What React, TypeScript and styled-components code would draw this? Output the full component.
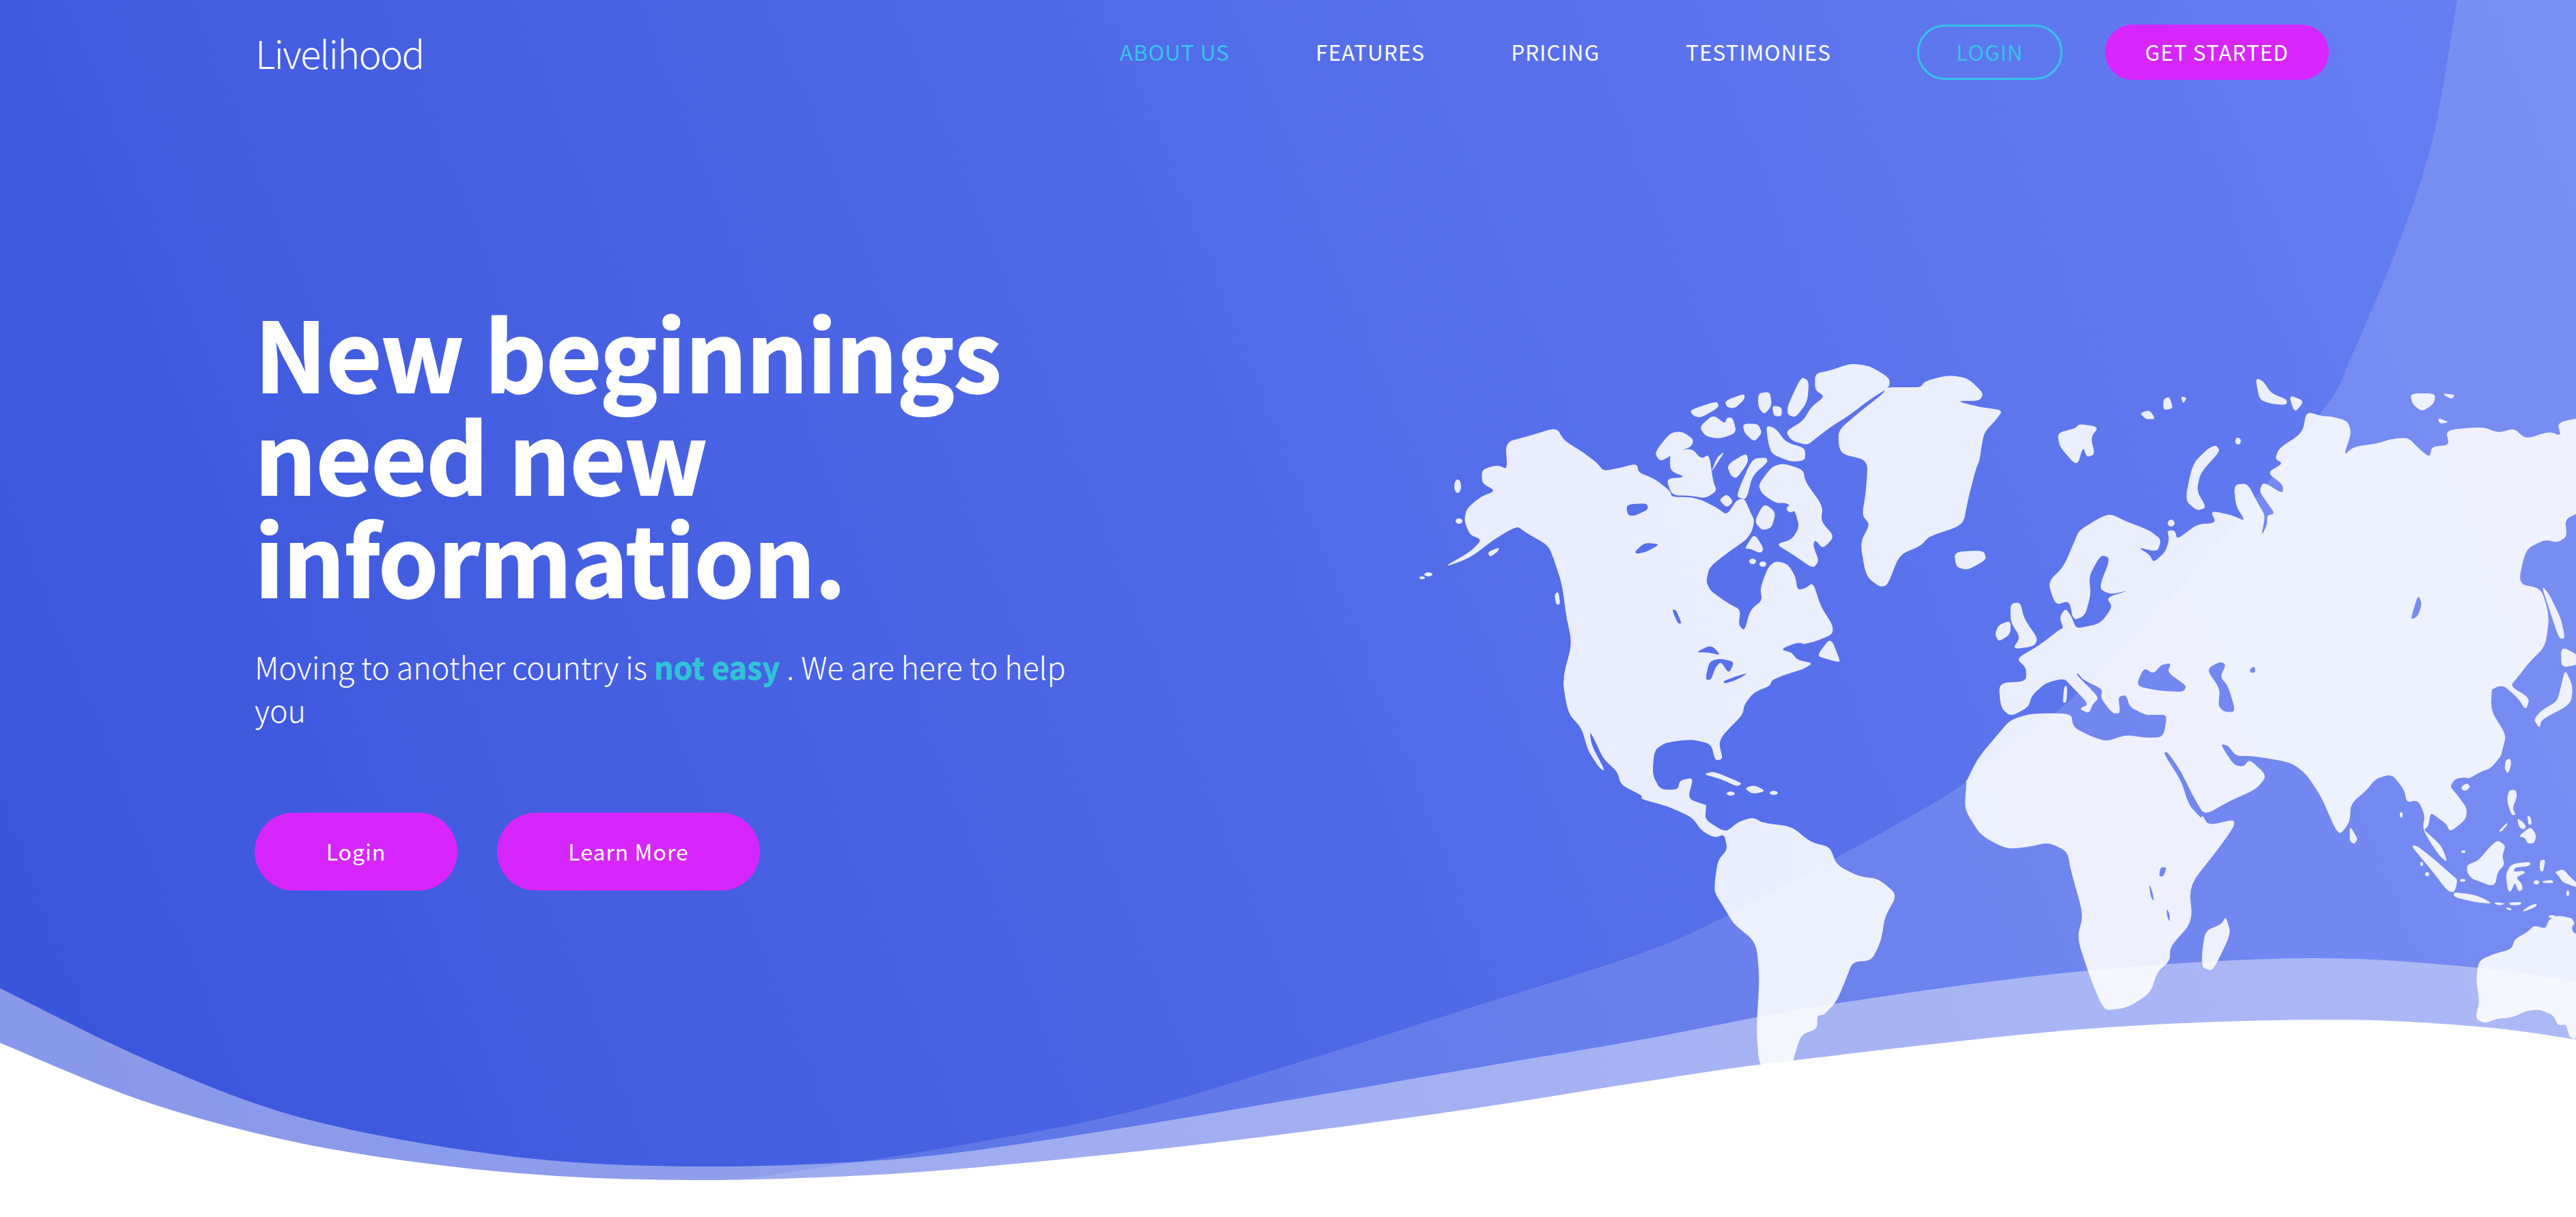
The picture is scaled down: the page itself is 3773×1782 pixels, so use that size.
import React from "react";
import styled, { createGlobalStyle } from "styled-components";

const FONT = `"Noto Sans CJK SC", "Open Sans", sans-serif`;

const GlobalStyle = createGlobalStyle`
	html, body {
		margin: 0;
		padding: 0;
		background: #fff;
	}
	body {
		font-family: ${FONT};
	}
`;

const Page = styled.div`
	position: relative;
	width: 3773px;
	height: 1782px;
	overflow: hidden;
	color: #fff;
`;

const Backdrop = styled.svg`
	position: absolute;
	top: 0;
	left: 0;
`;

const Content = styled.div`
	position: relative;
	display: flex;
	flex-direction: column;
	padding: 36px 362px 0 373px;
`;

const Header = styled.header`
	display: flex;
	align-items: center;
	height: 81px;
`;

const Logo = styled.div`
	padding-left: 1px;
	font-size: 56px;
	font-weight: 300;
	letter-spacing: -1.7px;
	line-height: 81px;
`;

const Nav = styled.nav`
	display: flex;
	align-items: center;
	margin-left: auto;
`;

const NavLink = styled.a<{ $active?: boolean }>`
	padding-bottom: 4px;
	margin-right: 126px;
	font-size: 31.5px;
	font-weight: 400;
	letter-spacing: 1px;
	color: ${(p) => (p.$active ? "#36c3e8" : "#fff")};
`;

const LoginButton = styled.a`
	box-sizing: border-box;
	display: flex;
	align-items: center;
	justify-content: center;
	width: 213px;
	height: 81px;
	padding-bottom: 4px;
	border: 3px solid #36c3e8;
	border-radius: 41px;
	font-size: 31.5px;
	letter-spacing: 1px;
	color: #36c3e8;
`;

const StartButton = styled.a`
	box-sizing: border-box;
	display: flex;
	align-items: center;
	justify-content: center;
	width: 328px;
	height: 81px;
	padding-bottom: 4px;
	margin-left: 62px;
	border-radius: 41px;
	background: #d626fb;
	font-size: 31.5px;
	letter-spacing: 1px;
`;

const Hero = styled.section`
	display: flex;
	flex-direction: column;
	margin-top: 322px;
`;

const Title = styled.h1`
	width: 1200px;
	margin: 0;
	font-size: 141px;
	font-weight: 700;
	line-height: 150px;
	letter-spacing: -1px;
	-webkit-text-stroke: 2px #fff;
`;

const Lead = styled.p`
	width: 1200px;
	margin: 55px 0 0;
	font-size: 44.8px;
	font-weight: 300;
	line-height: 63px;
`;

const Accent = styled.strong`
	font-weight: 700;
	color: #2fc4d8;
	-webkit-text-stroke: 0.6px #2fc4d8;
`;

const Actions = styled.div`
	display: flex;
	gap: 58px;
	margin-top: 120px;
`;

const ActionButton = styled.a<{ $width: number }>`
	box-sizing: border-box;
	display: flex;
	align-items: center;
	justify-content: center;
	width: ${(p) => p.$width}px;
	height: 114px;
	padding-bottom: 2px;
	border-radius: 57px;
	background: #d626fb;
	font-size: 32px;
	letter-spacing: 1px;
`;

// the crops the outlines were read from: offset x, offset y, scale x, scale y
const FRAMES: Record<string, number[]> = {
	a: [2050, 500, 0.574, 0.4464],
	b: [2873, 500, 0.574, 0.4464],
	c: [2300, 1100, 0.9394, 0.3333],
	d: [3400, 1050, 0.3333, 0.3333],
};

const toPoints = (frame: string, raw: string) => {
	const [ox, oy, sx, sy] = FRAMES[frame];
	return raw
		.trim()
		.split(/\s+/)
		.map((pair) => {
			const [x, y] = pair.split(",").map(Number);
			return [ox + x * sx, oy + y * sy];
		});
};

// rounded polygon: each corner is cut at 35% of the way along its two edges
const blob = (segments: [string, string][]) => {
	const pts = segments.flatMap(([f, raw]) => toPoints(f, raw));
	const along = (p: number[], q: number[], t: number) => [p[0] + (q[0] - p[0]) * t, p[1] + (q[1] - p[1]) * t];
	const fmt = (p: number[]) => `${p[0].toFixed(1)} ${p[1].toFixed(1)}`;
	let d = "";
	pts.forEach((p, i) => {
		const prev = pts[(i + pts.length - 1) % pts.length];
		const next = pts[(i + 1) % pts.length];
		const enter = along(p, prev, 0.35);
		const leave = along(p, next, 0.35);
		d += `${i === 0 ? "M" : "L"}${fmt(enter)}Q${fmt(p)} ${fmt(leave)}`;
	});
	return d + "Z";
};

const curve = (pts: number[][]) => {
	let d = `M${pts[0][0]} ${pts[0][1]}`;
	for (let i = 0; i < pts.length - 1; i++) {
		const p0 = pts[Math.max(i - 1, 0)];
		const p1 = pts[i];
		const p2 = pts[i + 1];
		const p3 = pts[Math.min(i + 2, pts.length - 1)];
		d += `C${p1[0] + (p2[0] - p0[0]) / 6} ${p1[1] + (p2[1] - p0[1]) / 6} ${p2[0] - (p3[0] - p1[0]) / 6} ${p2[1] - (p3[1] - p1[1]) / 6} ${p2[0]} ${p2[1]}`;
	}
	return d;
};

const LAND: [string, string][][] = [
	// north and central america
	[
		["a", "400,282 420,325 470,365 505,400 520,425 560,415 605,400 610,430 650,450 690,490 695,510 740,510 770,520 810,545 835,570 860,520 880,515 895,560 905,585 900,620 885,650 840,690 790,740 782,790 795,820 840,860 870,880 865,930 880,950 895,880 925,850 920,810 940,740 960,720 990,730 1010,770 1015,815 1035,810 1055,790 1075,870 1105,930 1105,960 1060,985 970,1010 1000,1020 1015,1045 1055,1055 1030,1075 990,1090 950,1110 945,1130 905,1150 880,1190 875,1225 825,1290 815,1320 825,1370 805,1375 795,1320 745,1305 680,1315 650,1340 645,1420 665,1470 710,1470 715,1440 750,1430 735,1500 780,1520"],
		["c", "212,235 210,300 235,345 245,350 262,310 285,290 300,315 345,330 375,400 405,420 415,500 450,550 480,560 510,630 490,730 485,830 470,920 440,925 430,1000 415,1100 395,1160 385,1160 385,1220 360,1245 350,1330 345,1400 295,1400 290,1220 295,1000 290,840 255,760 240,690 225,620 225,580 230,480 245,430 240,365 225,380 205,350 190,290 150,240 110,210"],
		["a", "620,1490 565,1455 555,1410 520,1370 495,1300 485,1280 490,1325 525,1410 510,1400 480,1340 465,1270 430,1220 415,1110 440,990 425,900 415,800 395,720 380,670 320,625 300,605 240,650 180,710 110,742 180,690 210,650 180,635 165,590 170,550 205,510 245,490 210,465 210,420 250,405 275,420 270,330 330,310"],
	],
	// arctic islands
	[["a", "1060,105 1100,95 1150,72 1200,80 1250,120 1250,150 1200,190 1150,240 1100,280 1060,320 1040,340 1000,325 985,295 1030,260 1050,215 1085,180 1060,160"]],
	[["a", "990,210 1025,115 1045,130 1040,200 1010,250 990,240"]],
	[["a", "740,225 810,195 815,215 770,250 750,245"]],
	[["a", "830,195 880,170 880,190 855,220 835,215"]],
	[["a", "915,170 945,165 950,210 930,240 915,215"]],
	[["a", "950,210 975,215 975,245 955,245"]],
	[["a", "765,280 800,240 830,270 835,250 850,250 860,300 815,320 780,310"]],
	[["a", "875,270 915,270 925,300 905,330 880,300"]],
	[["a", "935,275 960,285 985,330 1035,350 1035,390 1000,395 950,370 940,330"]],
	[["a", "650,365 690,300 720,295 750,320 745,345 705,365 665,395"]],
	[["a", "690,365 745,350 770,385 790,370 800,460 810,490 780,515 740,505 695,505 680,450 730,445 690,425"]],
	[["a", "810,380 830,360 805,410 795,430"]],
	[["a", "835,405 885,365 890,395 860,450 845,440"]],
	[["a", "870,470 900,385 935,380 940,395 900,440 885,520 860,510"]],
	[["a", "915,470 950,410 980,400 1030,420 1035,460 1080,540 1075,590 1110,640 1080,680 1060,650 1055,670 1070,720 1055,745 1005,700 960,665 1000,650 1020,610 1010,560 990,530 960,530 925,500"]],
	[["a", "880,680 905,630 930,680 920,695 895,680"]],
	[["a", "905,590 930,530 960,560 950,610 925,620"]],
	[["a", "815,520 835,500 852,525 835,545"]],
	[["a", "1065,1030 1100,970 1125,1050 1115,1050 1085,1040"]],
	[["a", "395,830 405,820 410,860 400,865"]],
	[["a", "422,905 440,915 460,960 450,960"]],
	[["a", "225,690 255,675 250,690 230,708"]],
	[["a", "775,1420 800,1410 840,1430 875,1450 860,1460 820,1435"]],
	[["a", "880,1465 905,1455 935,1475 900,1485"]],
	// greenland, iceland
	[["a", "1120,290 1180,225 1235,170 1240,150 1290,150 1330,150 1340,130 1400,110 1450,120 1490,170 1480,195 1420,195 1480,215 1540,225 1520,260 1490,300 1480,390 1470,420 1450,520 1440,590 1420,610 1350,640 1330,670 1275,700 1245,800 1225,805 1190,770 1175,660 1200,600 1180,570 1190,490 1195,390 1130,370 1120,340"]],
	[["a", "1415,690 1490,685 1498,715 1450,750 1420,740"]],
	// eurasia with africa
	[
		["b", "220,790 260,740 290,650 300,620 350,580 380,565 420,590 480,620 510,650 500,690 450,675 480,700 490,725 520,690 530,650 525,620 545,620 550,650 600,600 650,595 635,555 690,570 725,590 700,540 695,470 730,465 760,540 775,570 765,640 780,600 780,570 800,565 775,520 760,490 770,460 820,500 820,470 780,430 820,400 800,385 810,350 870,300 880,230 920,245 940,245 985,260 995,300 975,375 1000,345 1060,335 1095,320 1140,315 1170,355 1195,380 1200,345 1245,340 1235,290 1330,280 1370,300 1410,285 1440,320 1500,295 1530,310 1520,265 1600,245 1600,555 1568,565 1540,585 1545,640 1520,660 1490,650 1440,680 1420,795 1480,810 1500,900 1490,1000 1450,1050 1420,1100 1400,1130 1450,1170 1440,1210 1420,1170 1380,1125 1340,1150 1325,1140 1355,1110 1350,1210 1390,1290 1380,1340"],
		["d", "790,170 745,225 700,240 650,270 630,265 590,270 565,305 600,345 640,400 635,450 565,505 550,470 510,440 480,420 470,480 450,495 490,530 530,570 555,640 520,610 485,560 445,490 455,430 425,365 375,375 365,320 310,250 240,270 200,320 130,380 125,460 85,515 60,490 0,350"],
		["b", "880,1420 840,1380 745,1360 700,1360 680,1325 660,1320 695,1390 720,1395 735,1370 780,1425 750,1470 680,1510 620,1555 590,1490 560,1410 525,1345 515,1350 560,1440 580,1520 612,1565"],
		["c", "985,280 995,325 1035,300 1035,330 1010,430 965,590 970,750 935,860 935,920 915,970 905,1060 870,1125 835,1140 825,1095 810,990 790,820 800,720 780,520 775,440 745,400 715,420 680,430 640,370 620,280 615,240 618,120"],
		["b", "10,1450 40,1370 85,1300 125,1240 180,1220 280,1220 285,1265 330,1295 370,1312 420,1290 470,1300 515,1298 525,1225 495,1225 470,1225 430,1200 420,1160 400,1165 405,1220 385,1220 355,1170 360,1140 310,1110 295,1085 295,1095 330,1140 350,1170 335,1190 325,1220 300,1205 325,1190 280,1130 262,1105 215,1120 180,1160 170,1200 125,1230 100,1200 95,1120 165,1115 165,1070 140,1040 195,1000 250,945 260,940 250,905 265,875 280,900 290,935 300,940 355,925 385,870 370,840 430,815 380,830 350,810 380,710 355,700 325,770 330,830 315,900 285,915 275,850 240,865"],
	],
	// islands around europe and asia
	[["b", "125,860 150,855 160,910 195,975 185,1000 130,1010 150,970 125,920"]],
	[["b", "95,930 125,915 125,960 95,985 85,960"]],
	[["b", "245,300 290,285 300,270 350,280 330,315 340,370 320,380 310,345 295,410 250,345"]],
	[["b", "455,235 480,225 495,255 470,255"]],
	[["b", "515,190 530,180 540,220 515,225"]],
	[["b", "560,180 575,185 565,205"]],
	[["b", "650,340 660,360 610,430 600,490 625,545 600,555 570,520 590,400 630,350"]],
	[["b", "750,120 770,130 790,170 830,190 830,208 790,205 760,190"]],
	[["b", "835,175 875,195 850,235"]],
	[["b", "1145,170 1210,170 1205,205 1175,230 1150,205"]],
	[["b", "1225,170 1260,175 1250,190"]],
	[["b", "1215,250 1245,265 1220,270"]],
	[["b", "1480,800 1500,830 1530,910 1540,975 1525,975 1500,880"]],
	[["b", "1540,1075 1560,1130 1555,1190 1480,1240 1475,1270 1460,1240 1480,1210 1520,1180 1530,1130"]],
	[["b", "1530,1000 1575,1030 1575,1060 1530,1070"]],
	[["b", "262,1130 270,1130 268,1185 258,1185"]],
	// indian ocean and south east asia
	[["c", "1022,725 1030,800 1010,920 1000,965 985,950 985,880 990,790 1015,760"]],
	[["d", "125,490 130,485 160,535 145,558 125,545"]],
	[["d", "615,305 640,290 655,305 635,325 618,320"]],
	[["d", "810,190 830,180 835,210 820,250 805,225"]],
	[["d", "825,320 855,320 860,350 840,400 855,430 835,430 815,365"]],
	[["d", "860,445 885,460 900,480 890,495 870,485"]],
	[["d", "905,430 920,440 925,470 910,475"]],
	[["d", "865,525 920,480 945,520 935,555 905,555 895,530"]],
	[["d", "780,500 815,465 820,470 790,505"]],
	[["d", "640,650 690,630 740,570 775,540 810,565 795,610 805,650 775,680 765,735 740,740 690,720 660,710 640,680"]],
	[["d", "395,565 420,565 490,620 570,690 600,715 585,770 555,765 490,680 440,620"]],
	[["d", "580,775 590,770 670,780 720,800 750,820 690,815 620,800 585,790"]],
	[["d", "755,815 785,815 810,820 780,828"]],
	[["d", "825,815 880,812 875,825 830,827"]],
	[["d", "810,835 835,840 835,850 815,845"]],
	[["d", "885,850 920,825 950,820 940,835 890,855"]],
	[["d", "810,690 835,645 920,635 915,655 850,660 845,680 890,675 895,685 855,705 880,730 885,760 865,765 850,725 835,765 820,765"]],
	[["d", "960,630 985,625 975,680 960,675"]],
	[["d", "970,720 1015,715 1020,730 975,728"]],
	[["d", "1025,680 1065,668 1090,700 1125,730 1125,750 1060,725 1045,700"]],
	// australia
	[["d", "1040,870 1125,890 1125,1420 1090,1405 1085,1385 1075,1350 1040,1355 1020,1310 960,1285 900,1290 840,1320 770,1325 720,1345 685,1330 680,1310 695,1250 680,1155 692,1070 760,1040 835,1020 850,975 905,945 935,915 985,930 1000,890"]],
];

const WATER: [string, string][][] = [
	[["a", "578,535 630,530 635,550 600,572 582,570"]],
	[["a", "600,690 625,660 665,665 630,690 605,697"]],
	[["a", "695,880 705,880 720,925 710,925"]],
	[["a", "755,1020 795,995 820,1030 790,1020"]],
	[["a", "780,1110 790,1050 815,1040 855,1050 840,1090 820,1050 805,1070 795,1110"]],
	[["a", "825,1115 865,1095 890,1088 860,1110 830,1122"]],
	[["a", "970,1010 1020,985 1040,1000 1015,1010"]],
	[["a", "985,590 1005,578 1010,595 990,612"]],
	[["b", "445,1130 465,1070 490,1090 510,1060 535,1055 525,1085 575,1130 565,1150 500,1145"]],
	[["b", "625,1075 660,1050 675,1060 660,1100 680,1130 700,1215 670,1215 655,1195 660,1140"]],
	[["b", "1145,915 1165,830 1175,860 1165,900"]],
	[["b", "735,1075 748,1065 750,1085 738,1087"]],
	[["c", "920,510 930,510 925,550 918,550"]],
	[["c", "902,580 908,620 910,660 905,640"]],
	[["c", "930,690 935,720 934,750 930,720"]],
	[["d", "1100,920 1125,900 1125,955 1105,945"]],
];

const ISLETS = [
	[2135, 712, 5, 10],
	[2137, 763, 5, 4],
	[2092, 841, 6, 3],
	[2083, 846, 4, 2],
	[2535, 1162, 6, 3],
	[2598, 1161, 6, 3],
	[2567, 822, 5, 4],
	[2582, 826, 5, 4],
	[2618, 848, 3, 4],
	[2623, 745, 6, 5],
	[3180, 766, 5, 5],
	[3278, 646, 4, 5],
	[3517, 1193, 2, 4],
	[3608, 1247, 3, 2],
	[3607, 1289, 4, 2],
	[3547, 1265, 2, 3],
	[3555, 1280, 3, 3],
	[3761, 1308, 2, 4],
	[3738, 1342, 5, 2],
	[3715, 1292, 4, 3],
];

const FRONT_EDGE = [
	[0, 1447], [204, 1547], [408, 1627], [612, 1673], [816, 1700], [1020, 1708], [1224, 1703], [1400, 1688], [1655, 1650],
	[1910, 1607], [2165, 1563], [2400, 1523], [2685, 1470], [3051, 1422], [3380, 1403], [3630, 1417], [3773, 1438],
];

const WHITE_EDGE = [
	[0, 1527], [204, 1610], [408, 1667], [612, 1702], [816, 1722], [1020, 1728], [1224, 1723], [1400, 1712], [1655, 1687],
	[1910, 1657], [2165, 1622], [2400, 1585], [2624, 1553], [3051, 1507], [3400, 1493], [3627, 1503], [3773, 1522],
];

const SHEEN_EDGE = [
	[3599, 0], [3570, 173], [3543, 273], [3503, 383], [3445, 520], [3401, 603], [3220, 830], [3045, 1013], [2882, 1143],
	[2790, 1200], [2695, 1253], [2525, 1343], [2400, 1397], [2165, 1472], [1910, 1553], [1655, 1628], [1400, 1678], [1082, 1728],
];

function Background() {
	return (
		<Backdrop width="3773" height="1782" viewBox="0 0 3773 1782">
			<defs>
				<linearGradient id="heroFill" gradientUnits="userSpaceOnUse" x1="0" y1="1500" x2="3773" y2="0">
					<stop offset="0" stopColor="#3a54dc" />
					<stop offset="1" stopColor="#6880f3" />
				</linearGradient>
				<mask id="worldMask" maskUnits="userSpaceOnUse" x="0" y="0" width="3773" height="1782">
					{LAND.map((shape, i) => (
						<path key={i} d={blob(shape)} fill="#fff" />
					))}
					{ISLETS.map(([cx, cy, rx, ry], i) => (
						<ellipse key={i} cx={cx} cy={cy} rx={rx} ry={ry} fill="#fff" />
					))}
					{WATER.map((shape, i) => (
						<path key={i} d={blob(shape)} fill="#000" />
					))}
				</mask>
			</defs>
			<rect width="3773" height="1782" fill="url(#heroFill)" />
			<path d={`${curve(SHEEN_EDGE)}L3773 1782L3773 0Z`} fill="#fff" fillOpacity="0.13" />
			<rect width="3773" height="1782" fill="#fff" fillOpacity="0.88" mask="url(#worldMask)" />
			<path d={`${curve(FRONT_EDGE)}L3773 1782L0 1782Z`} fill="#fff" fillOpacity="0.4" />
			<path d={`${curve(WHITE_EDGE)}L3773 1782L0 1782Z`} fill="#fff" />
		</Backdrop>
	);
}

export default function App() {
	return (
		<Page>
			<GlobalStyle />
			<Background />
			<Content>
				<Header>
					<Logo>Livelihood</Logo>
					<Nav>
						<NavLink $active>ABOUT US</NavLink>
						<NavLink>FEATURES</NavLink>
						<NavLink>PRICING</NavLink>
						<NavLink>TESTIMONIES</NavLink>
						<LoginButton>LOGIN</LoginButton>
						<StartButton>GET STARTED</StartButton>
					</Nav>
				</Header>
				<Hero>
					<Title>New beginnings need new information.</Title>
					<Lead>
						Moving to another country is <Accent>not easy</Accent> . We are here to help you
					</Lead>
					<Actions>
						<ActionButton $width={297}>Login</ActionButton>
						<ActionButton $width={385}>Learn More</ActionButton>
					</Actions>
				</Hero>
			</Content>
		</Page>
	);
}
